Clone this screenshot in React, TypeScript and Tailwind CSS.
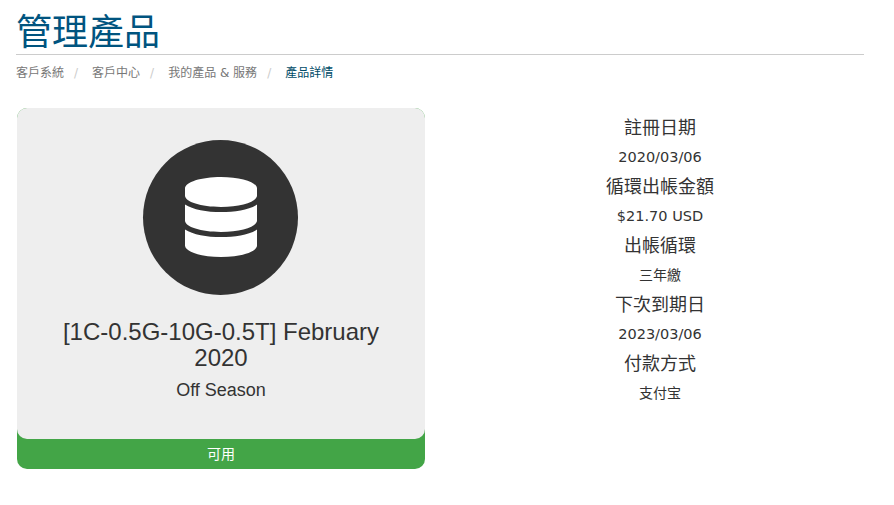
import React from 'react';
import { FaDatabase } from 'react-icons/fa';

const cjk = "font-['DejaVu_Sans','Noto_Sans_CJK_TC',sans-serif]";

const crumbs = ['客戶系統', '客戶中心', '我的產品 & 服務'];

const details = [
  { label: '註冊日期', value: '2020/03/06', size: 'text-[14.5px]' },
  { label: '循環出帳金額', value: '$21.70 USD', size: 'text-[14.5px]' },
  { label: '出帳循環', value: '三年繳', size: 'text-[14px]' },
  { label: '下次到期日', value: '2023/03/06', size: 'text-[14.5px]' },
  { label: '付款方式', value: '支付宝', size: 'text-[14px]' },
];

const App: React.FC = () => {
  return (
    <div className={`min-h-screen bg-white ${cjk} text-[#333]`}>
      <div className="w-[864px] pl-4">
        {/* Header */}
        <div className="border-b border-[#ccc] h-[55px]">
          <h1 className="text-[36px] leading-[58px] text-[#00547f] font-['Noto_Sans_CJK_TC',sans-serif]">管理產品</h1>
        </div>

        {/* Breadcrumb */}
        <ol className="flex items-center h-[36px] text-[12px] text-[#777]">
          {crumbs.map((crumb) => (
            <li key={crumb} className="flex items-center">
              {crumb}
              <span className="text-[#ccc] ml-[10px] mr-[14px]">/</span>
            </li>
          ))}
          <li className="text-[#004c68]">產品詳情</li>
        </ol>

        {/* Two columns */}
        <div className="flex mt-[17px] pl-px">
          <div className="w-[408px] bg-[#43a547] rounded-[10px] h-[361px] text-center">
            <div className="bg-[#eeeeee] rounded-[10px] h-[331px] pt-[32px] font-['Liberation_Sans',sans-serif]">
              <div className="w-[155px] h-[155px] rounded-full bg-[#333] ml-[126px] pb-px flex items-center justify-center">
                <FaDatabase preserveAspectRatio="none" className="text-white w-[72px] h-[80px]" />
              </div>
              <h2 className="text-[24px] leading-[26px] mt-[24px] px-[30px]">[1C-0.5G-10G-0.5T] February 2020</h2>
              <p className="text-[18px] leading-[20px] mt-[9px]">Off Season</p>
            </div>
            <div className="text-white text-[14px] leading-[30px]">可用</div>
          </div>

          <div className="w-[408px] ml-[31px] text-center pt-[5px]">
            {details.map((item) => (
              <div key={item.label}>
                <div className="text-[18px] leading-[30px]">{item.label}</div>
                <div className={`${item.size} leading-[29px]`}>{item.value}</div>
              </div>
            ))}
          </div>
        </div>
      </div>
    </div>
  );
};

export default App;
